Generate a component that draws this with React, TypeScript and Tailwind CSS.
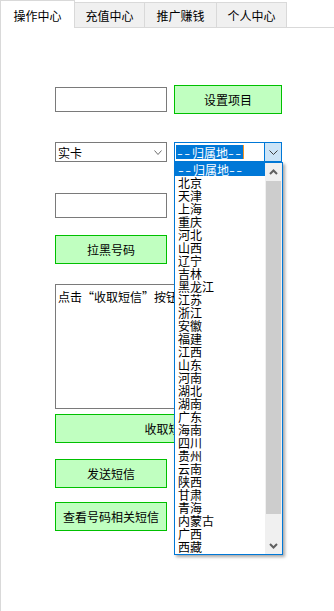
import React from "react";

const items = [
  "--归属地--", "北京", "天津", "上海", "重庆", "河北", "山西", "辽宁", "吉林", "黑龙江",
  "江苏", "浙江", "安徽", "福建", "江西", "山东", "河南", "湖北", "湖南", "广东",
  "海南", "四川", "贵州", "云南", "陕西", "甘肃", "青海", "内蒙古", "广西", "西藏",
];

const Chevron = ({ color = "#606060", w = 9, h = 5, sw = 1 }: { color?: string; w?: number; h?: number; sw?: number }) => (
  <svg width={w} height={h} viewBox={`0 0 ${w} ${h}`}>
    <polyline points={`0.5,0.5 ${w / 2},${h - 0.5} ${w - 0.5},0.5`} fill="none" stroke={color} strokeWidth={sw} />
  </svg>
);

const ArrowUp = () => (
  <svg width="9" height="6" viewBox="0 0 9 6">
    <polyline points="1,5 4.5,1.5 8,5" fill="none" stroke="#606060" strokeWidth="2" />
  </svg>
);
const ArrowDown = () => (
  <svg width="9" height="6" viewBox="0 0 9 6">
    <polyline points="1,1 4.5,4.5 8,1" fill="none" stroke="#606060" strokeWidth="2" />
  </svg>
);

const GreenBtn = ({ children, className = "" }: { children: React.ReactNode; className?: string }) => (
  <div className={`h-[29px] bg-[#c0ffc0] border border-[#00c000] flex items-center justify-center text-black ${className}`}>
    {children}
  </div>
);

const Dash = () => (
  <span className="inline-block w-[15px] text-center">
    <span className="inline-block scale-x-[1.4] tracking-[1px]">--</span>
  </span>
);

const Placeholder = () => (
  <>
    <Dash />
    归属地
    <Dash />
  </>
);

export default function App() {
  return (
    <div
      className="relative w-[334px] h-[611px] bg-white overflow-hidden text-[12px] leading-[13px] text-black"
      style={{ fontFamily: '"Noto Sans CJK SC", "Noto Sans", sans-serif' }}
    >
      {/* tabs */}
      <div className="flex h-[28px]">
        <div className="w-[75px] h-[28px] bg-white border-l border-t border-r border-[#d9d9d9] flex items-center justify-center pt-[2px]">
          操作中心
        </div>
        <div className="flex flex-col flex-1">
          <div className="flex mt-[2px] h-[26px] border-b border-[#d9d9d9]">
            <div className="w-[70px] bg-[#f0f0f0] border-t border-r border-[#d9d9d9] flex items-center justify-center">充值中心</div>
            <div className="w-[72px] bg-[#f0f0f0] border-t border-r border-[#d9d9d9] flex items-center justify-center">推广赚钱</div>
            <div className="w-[70px] bg-[#f0f0f0] border-t border-r border-[#d9d9d9] flex items-center justify-center">个人中心</div>
            <div className="flex-1" />
          </div>
        </div>
      </div>

      {/* panel */}
      <div className="h-[583px] border-l border-[#d9d9d9] pl-[54px] pt-[57px] flex flex-col">
        <div className="flex items-center gap-[7px]">
          <div className="w-[112px] h-[25px] border border-[#7a7a7a] bg-white" />
          <GreenBtn className="w-[108px]">设置项目</GreenBtn>
        </div>

        <div className="flex mt-[28px] gap-[7px] h-[20px]">
          <div className="w-[112px] h-[20px] border border-[#7a7a7a] bg-white flex items-center pl-[2px] pr-[4px]">
            <span className="flex-1">实卡</span>
            <Chevron color="#6d6d6d" w={8} h={5} />
          </div>
          <div className="w-[108px] h-[20px] border border-[#0078d7] bg-white flex items-stretch">
            <div className="flex-1 flex items-center pl-[1px] overflow-hidden">
              <span className="bg-[#0078d7] text-white h-[14px] flex items-center pl-[1px] whitespace-nowrap">
                <Placeholder />
              </span>
              <span className="w-[1px] h-[14px] bg-[#f7931e]" />
            </div>
            <div className="w-[17px] bg-[#cce4f7] border-l border-[#0078d7] flex items-center justify-center">
              <Chevron color="#404040" w={9} h={5} />
            </div>
          </div>
        </div>

        <div className="mt-[31px] w-[112px] h-[25px] border border-[#7a7a7a] bg-white" />
        <GreenBtn className="mt-[17px] w-[112px]">拉黑号码</GreenBtn>

        <div className="mt-[20px] w-[227px] h-[125px] border border-[#7a7a7a] bg-white px-[2px] pt-[5px] whitespace-nowrap overflow-hidden">
          点击“收取短信”按钮
        </div>
        <GreenBtn className="mt-[5px] w-[227px]">收取短信</GreenBtn>
        <GreenBtn className="mt-[16px] w-[112px]">发送短信</GreenBtn>
        <GreenBtn className="mt-[14px] w-[112px]">查看号码相关短信</GreenBtn>
      </div>

      {/* open dropdown list */}
      <div className="absolute left-[174px] top-[162px] w-[109px] h-[393px] border border-[#0078d7] bg-white flex shadow-[2px_2px_3px_rgba(0,0,0,0.35)]">
        <div className="flex-1 flex flex-col">
          {items.map((it, i) => (
            <div
              key={it}
              className={`h-[13px] leading-[13px] pl-[3px] whitespace-nowrap ${i === 0 ? "bg-[#0078d7] text-white" : ""}`}
            >
              {i === 0 ? <Placeholder /> : it}
            </div>
          ))}
        </div>
        <div className="w-[17px] bg-[#f0f0f0] flex flex-col items-center">
          <div className="h-[18px] w-full flex items-center justify-center">
            <ArrowUp />
          </div>
          <div className="w-[15px] h-[333px] bg-[#cdcdcd]" />
          <div className="flex-1" />
          <div className="h-[17px] w-full flex items-center justify-center">
            <ArrowDown />
          </div>
        </div>
      </div>
    </div>
  );
}
